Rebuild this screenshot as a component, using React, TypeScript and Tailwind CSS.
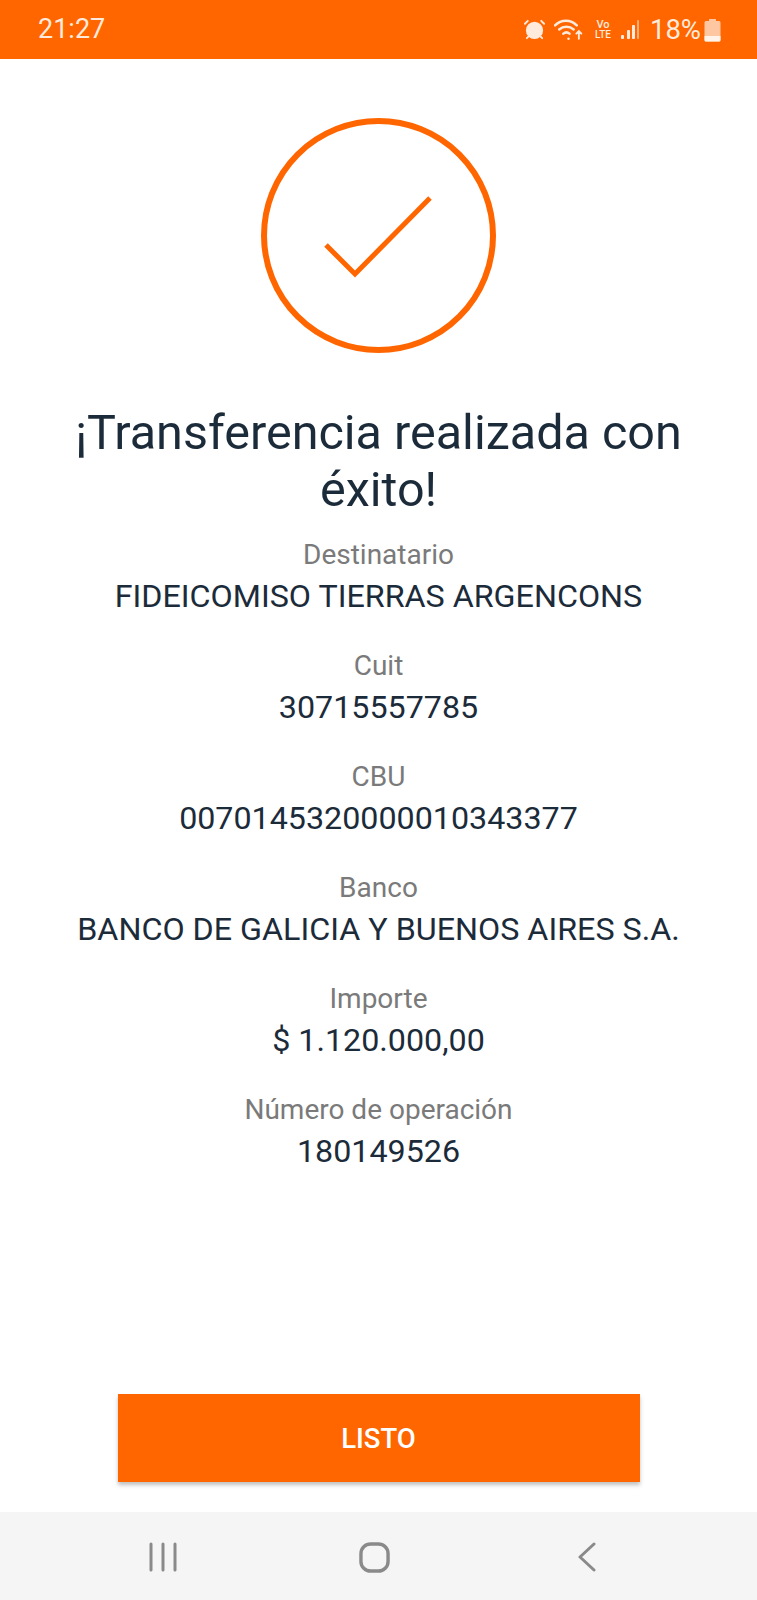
import { AlarmClock } from 'lucide-react'

const rows = [
  { label: 'Destinatario', value: 'FIDEICOMISO TIERRAS ARGENCONS' },
  { label: 'Cuit', value: '30715557785' },
  { label: 'CBU', value: '0070145320000010343377' },
  { label: 'Banco', value: 'BANCO DE GALICIA Y BUENOS AIRES S.A.' },
  { label: 'Importe', value: '$ 1.120.000,00' },
  { label: 'Número de operación', value: '180149526' },
]

function StatusBar() {
  return (
    <div className="flex h-[59px] shrink-0 items-center justify-between bg-[#ff6600] pl-[38px] pr-[36px] text-[#ffeadb]">
      <span className="text-[27px] leading-none">21:27</span>
      <div className="flex items-center">
        <AlarmClock className="h-[23px] w-[23px] fill-[#ffeadb] text-[#ffeadb]" strokeWidth={2} />
        <svg viewBox="0 0 28 24" className="ml-[8px] h-[25px] w-[29px]" fill="none" stroke="currentColor" strokeWidth="2.4" strokeLinecap="round">
          <path d="M1 8c6-6 15-6 21 0" />
          <path d="M5 12c4-3.6 10-3.6 14 0" />
          <path d="M9 16c2-1.6 4-1.6 6 0" />
          <path d="M14 21v-.1" />
          <path d="M24 21v-7M21.6 16l2.4-2.5 2.4 2.5" strokeWidth="1.8" />
        </svg>
        <div className="ml-[10px] flex w-[20px] flex-col items-center text-[11px] font-medium leading-[10px]">
          <span>Vo</span>
          <span className="text-[10px]">LTE</span>
        </div>
        <svg viewBox="0 0 20 24" className="ml-[7px] h-[24px] w-[20px]" fill="currentColor">
          <rect x="1" y="17" width="3" height="4" rx="1" />
          <rect x="7" y="12" width="3" height="9" rx="1" />
          <rect x="12" y="7" width="3" height="14" rx="1" />
          <rect x="17" y="2" width="2" height="19" rx="1" opacity="0.55" />
        </svg>
        <span className="ml-[10px] text-[27.500px] leading-none">18%</span>
        <svg viewBox="0 0 17 24" className="ml-[3px] h-[24px] w-[17px]">
          <path d="M5 1h7v2h3a1.5 1.5 0 0 1 1.500 1.500V22a1.500 1.500 0 0 1-1.500 1.500H2A1.500 1.500 0 0 1 .5 22V4.500A1.500 1.500 0 0 1 2 3h3z" fill="#ffc7a1" />
          <path d="M.5 18h16v4a1.500 1.500 0 0 1-1.500 1.500H2A1.500 1.500 0 0 1 .5 22z" fill="#fff3ea" />
        </svg>
      </div>
    </div>
  )
}

function SuccessIcon() {
  return (
    <svg viewBox="0 0 235 235" className="h-[235px] w-[235px]" fill="none" stroke="#ff6600">
      <circle cx="117.500" cy="117.500" r="114.500" strokeWidth="6" />
      <path d="M65 127l29 29 75-76" strokeWidth="5" />
    </svg>
  )
}

export default function App() {
  return (
    <div className="flex h-[1600px] w-[757px] flex-col bg-white font-['Roboto',sans-serif] text-[#1c2b3a]">
      <StatusBar />
      <main className="flex flex-1 flex-col items-center">
        <div className="mt-[59px]">
          <SuccessIcon />
        </div>
        <h1 className="mt-[51px] px-[40px] text-center text-[48.500px] leading-[57px]">
          ¡Transferencia realizada con éxito!
        </h1>
        <div className="mt-[16px] flex flex-col items-center gap-[28px]">
          {rows.map((row) => (
            <div key={row.label} className="flex flex-col items-center">
              <span className="text-[28px] leading-[41px] text-[#7a7a7a]">{row.label}</span>
              <span className="text-[32.250px] leading-[42px]">{row.value}</span>
            </div>
          ))}
        </div>
        <button className="mb-[30px] mt-auto flex h-[88px] w-[522px] items-center justify-center bg-[#ff6600] pt-[2px] text-[27.500px] font-medium text-white shadow-[0_3px_4px_rgba(0,0,0,0.25)]">
          LISTO
        </button>
      </main>
      <nav className="flex h-[88px] shrink-0 items-center justify-between bg-[#f5f5f5] pl-[148px] pr-[160px] pt-[2px] text-[#8a8a8a]">
        <svg viewBox="0 0 30 30" className="h-[30px] w-[30px]" fill="none" stroke="currentColor" strokeWidth="3" strokeLinecap="round">
          <path d="M3 2v26M15 2v26M27 2v26" />
        </svg>
        <svg viewBox="0 0 32 32" className="mr-[6px] h-[31px] w-[31px]" fill="none" stroke="currentColor" strokeWidth="3.500">
          <rect x="2" y="2" width="28" height="28" rx="10" />
        </svg>
        <svg viewBox="0 0 20 30" className="h-[30px] w-[20px]" fill="none" stroke="currentColor" strokeWidth="3" strokeLinecap="round" strokeLinejoin="round">
          <path d="M17 2L3 15l14 13" />
        </svg>
      </nav>
    </div>
  )
}
